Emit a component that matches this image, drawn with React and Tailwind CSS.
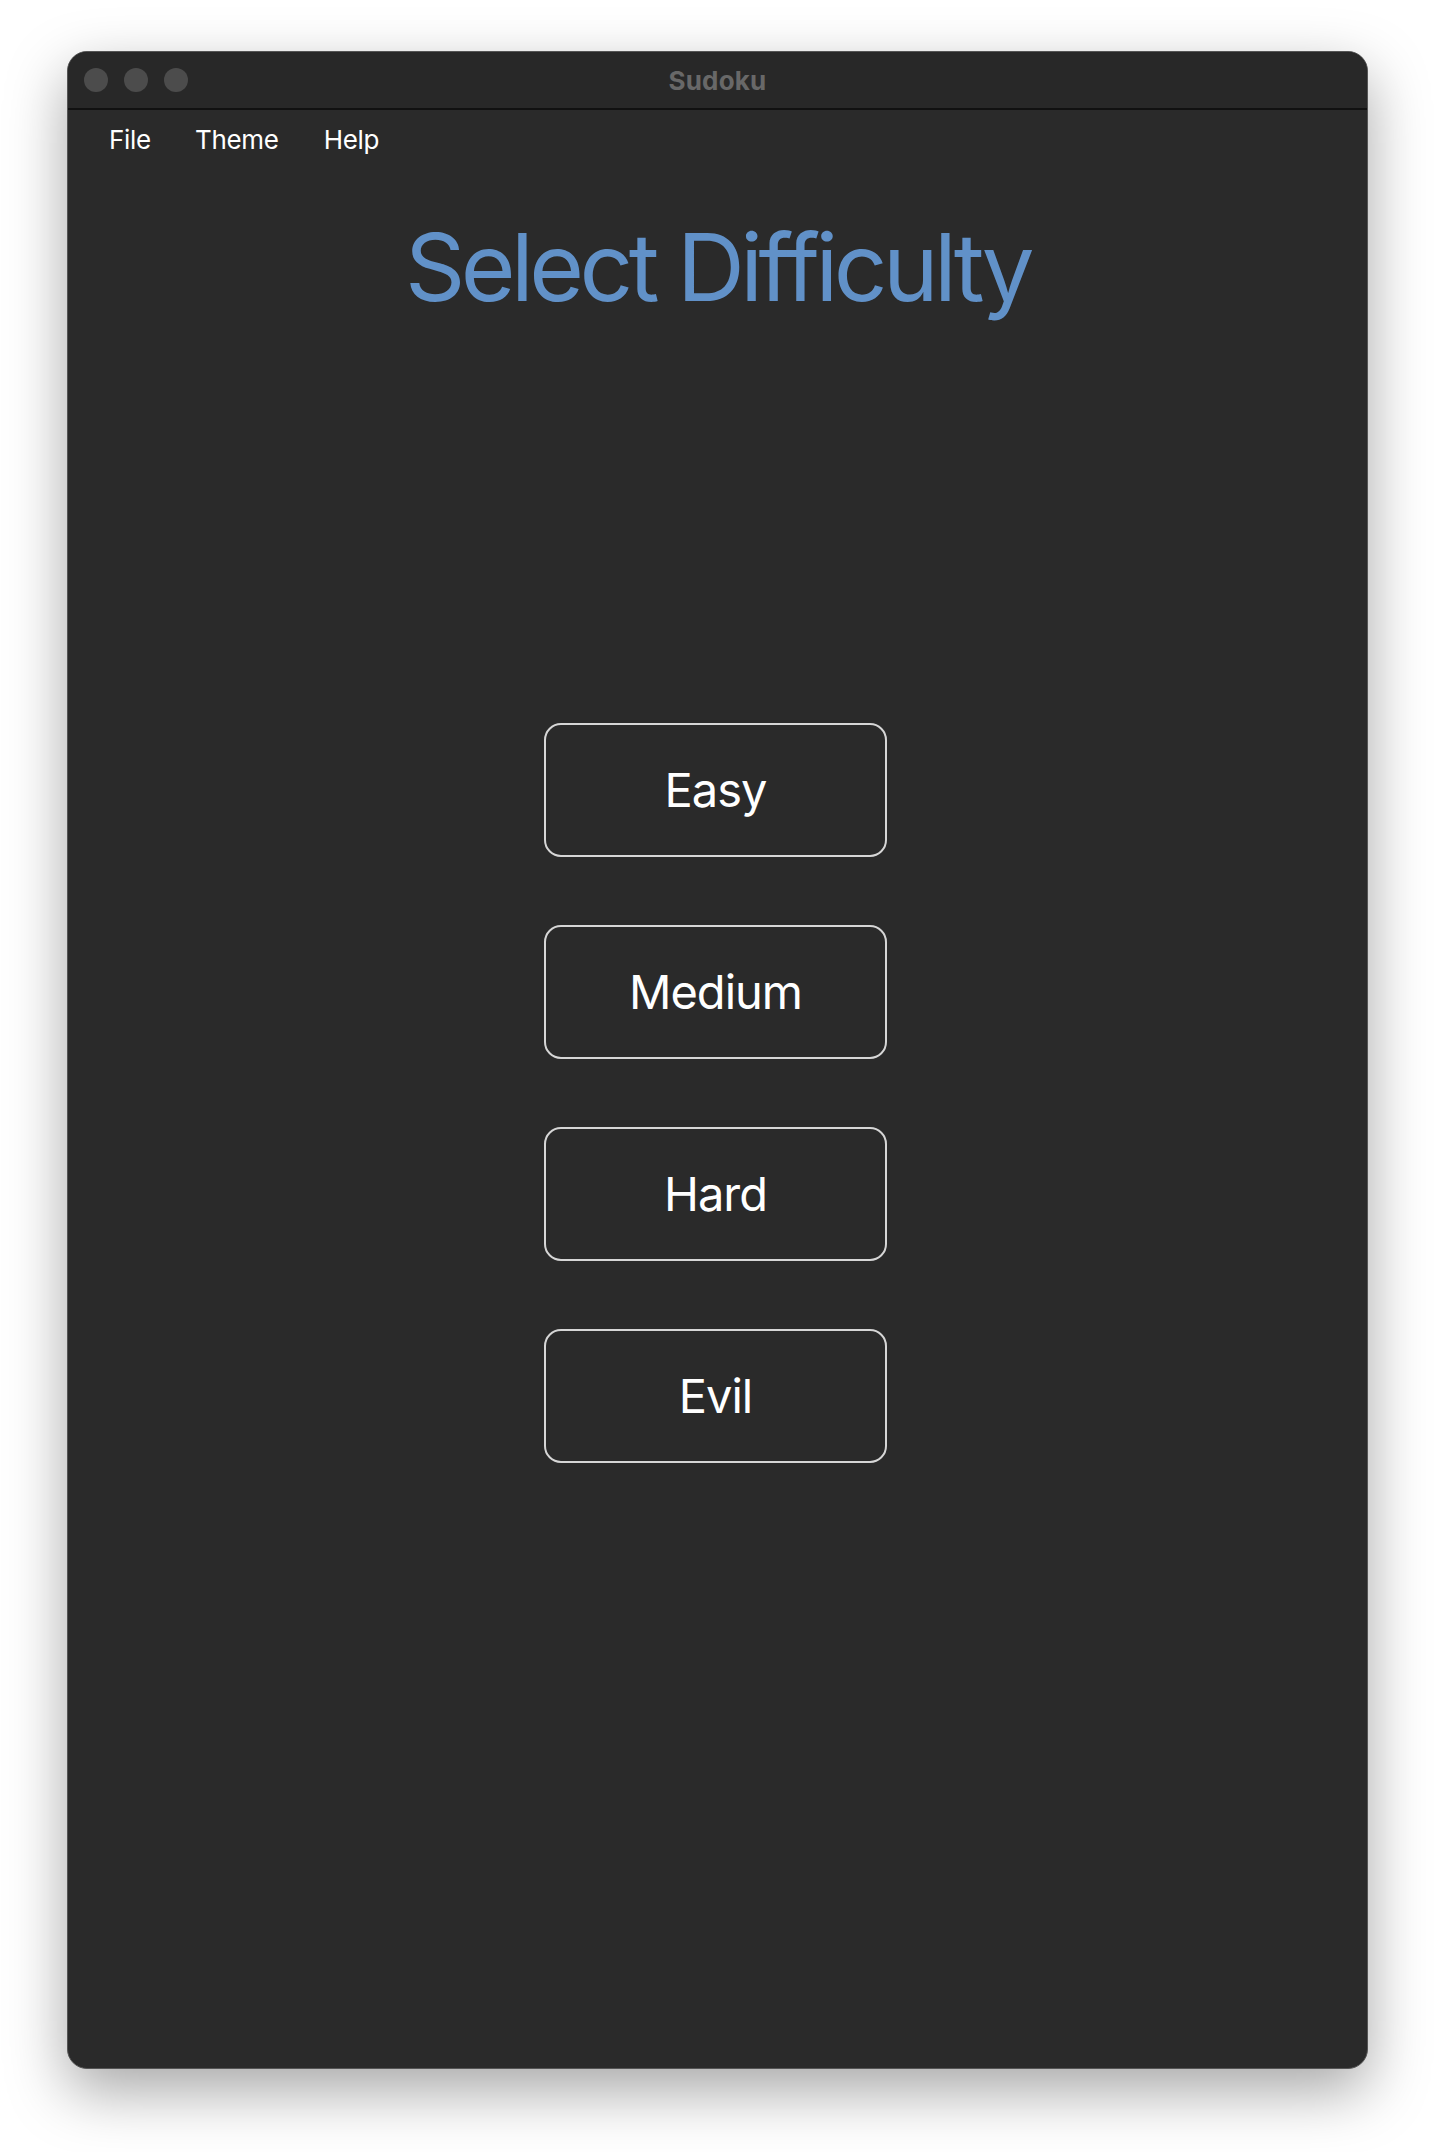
import React from 'react';

const levels = ['Easy', 'Medium', 'Hard', 'Evil'];

export default function App() {
  return (
    <div className="w-[1436px] h-[2152px] bg-white pt-[51px] pl-[67px]" style={{ fontFamily: 'Inter, "Liberation Sans", sans-serif' }}>
      <div className="w-[1301px] h-[2018px] rounded-[20px] bg-[#2a2a2a] border border-[#555555] shadow-[0_22px_60px_rgba(0,0,0,0.35)] overflow-hidden flex flex-col">
        {/* title bar */}
        <div className="relative h-[58px] shrink-0 bg-[#282828] border-b-2 border-[#111111] flex items-center">
          <div className="flex gap-[16px] pl-[16px]">
            <span className="w-[24px] h-[24px] rounded-full bg-[#4c4c4c]" />
            <span className="w-[24px] h-[24px] rounded-full bg-[#4c4c4c]" />
            <span className="w-[24px] h-[24px] rounded-full bg-[#4c4c4c]" />
          </div>
          <div className="absolute inset-0 flex items-center justify-center text-[26px] font-bold text-[#686868] tracking-[0.2px]">
            Sudoku
          </div>
        </div>

        {/* menu bar */}
        <div className="h-[58px] flex items-center pl-[41px] text-[26px] text-white tracking-[-0.3px]">
          <span className="mr-[44px]">File</span>
          <span className="mr-[45px]">Theme</span>
          <span>Help</span>
        </div>

        <h1 className="mt-[52px] text-center text-[94px] leading-none text-[#6191c8] tracking-[-4.5px]">
          Select Difficulty
        </h1>

        <div className="mt-[409px] pr-[4px] flex flex-col items-center gap-[68px]">
          {levels.map((level) => (
            <button
              key={level}
              className="w-[343px] h-[134px] rounded-[17px] border-2 border-[#d6d6d6] bg-[#2a2a2a] text-white text-[47px] tracking-[-1px]"
            >
              {level}
            </button>
          ))}
        </div>
      </div>
    </div>
  );
}
